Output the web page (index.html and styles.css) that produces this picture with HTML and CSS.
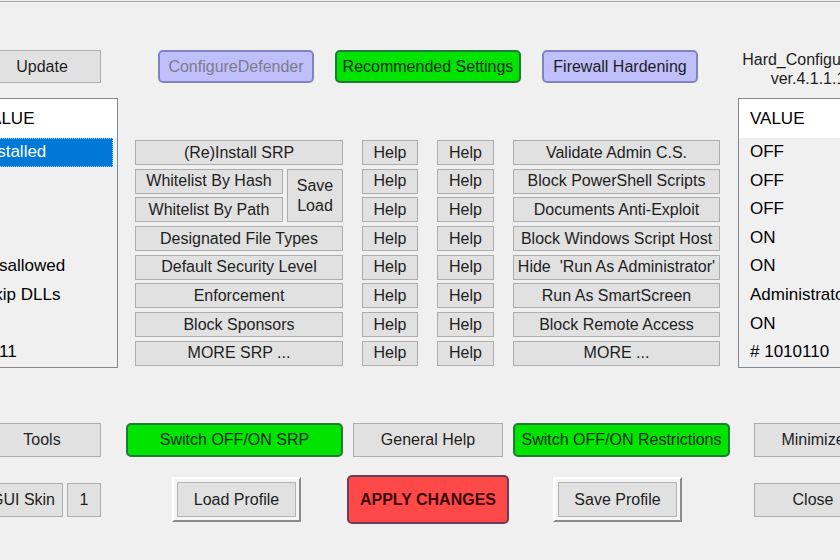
FILE: index.html
```html
<!DOCTYPE html>
<html lang="en">
    <head>
        <meta charset="UTF-8">
        <meta name="viewport" content="width=device-width, initial-scale=1.0">
        <link rel="stylesheet" href="styles.css">
        <title>Hard_Configurator</title>
    </head>

    <body>
    <div class="window">

        <div class="row row-top">
            <button class="btn btn-side">Update</button>
            <button class="btn pill lilac dim defender">ConfigureDefender</button>
            <button class="btn pill green recommended">Recommended Settings</button>
            <button class="btn pill lilac firewall">Firewall Hardening</button>
            <div class="title">Hard_Configurator<br>ver.4.1.1.1</div>
        </div>

        <div class="row row-middle">
            <div class="list list-left">
                <div class="list-head">VALUE</div>
                <div class="list-row selected">Installed</div>
                <div class="list-row"></div>
                <div class="list-row"></div>
                <div class="list-row"></div>
                <div class="list-row">Disallowed</div>
                <div class="list-row">Skip DLLs</div>
                <div class="list-row"></div>
                <div class="list-row">W11</div>
            </div>

            <div class="panel">
                <button class="btn">(Re)Install SRP</button>
                <button class="btn">Help</button>
                <button class="btn">Help</button>
                <button class="btn">Validate Admin C.S.</button>

                <div class="split">
                    <button class="btn">Whitelist By Hash</button>
                    <button class="btn">Whitelist By Path</button>
                    <button class="btn stack">Save<br>Load</button>
                </div>
                <button class="btn">Help</button>
                <button class="btn">Help</button>
                <button class="btn">Block PowerShell Scripts</button>

                <button class="btn">Help</button>
                <button class="btn">Help</button>
                <button class="btn">Documents Anti-Exploit</button>

                <button class="btn">Designated File Types</button>
                <button class="btn">Help</button>
                <button class="btn">Help</button>
                <button class="btn">Block Windows Script Host</button>

                <button class="btn">Default Security Level</button>
                <button class="btn">Help</button>
                <button class="btn">Help</button>
                <button class="btn">Hide &nbsp;'Run As Administrator'</button>

                <button class="btn">Enforcement</button>
                <button class="btn">Help</button>
                <button class="btn">Help</button>
                <button class="btn">Run As SmartScreen</button>

                <button class="btn">Block Sponsors</button>
                <button class="btn">Help</button>
                <button class="btn">Help</button>
                <button class="btn">Block Remote Access</button>

                <button class="btn">MORE SRP ...</button>
                <button class="btn">Help</button>
                <button class="btn">Help</button>
                <button class="btn">MORE ...</button>
            </div>

            <div class="list list-right">
                <div class="list-head">VALUE</div>
                <div class="list-row">OFF</div>
                <div class="list-row">OFF</div>
                <div class="list-row">OFF</div>
                <div class="list-row">ON</div>
                <div class="list-row">ON</div>
                <div class="list-row">Administrator</div>
                <div class="list-row">ON</div>
                <div class="list-row"># 1010110</div>
            </div>
        </div>

        <div class="row row-switch">
            <button class="btn btn-side tall">Tools</button>
            <button class="btn pill green switch-srp">Switch OFF/ON SRP</button>
            <button class="btn tall general">General Help</button>
            <button class="btn pill green switch-restr">Switch OFF/ON Restrictions</button>
            <button class="btn tall minimize">Minimize</button>
        </div>

        <div class="row row-bottom">
            <button class="btn tall skin">GUI Skin</button>
            <button class="btn tall skin-num">1</button>
            <button class="raised load"><span class="face">Load Profile</span></button>
            <button class="btn pill red apply">APPLY CHANGES</button>
            <button class="raised save"><span class="face">Save Profile</span></button>
            <button class="btn tall close">Close</button>
        </div>

    </div>
    </body>
</html>
```

FILE: styles.css
```css
* { box-sizing: border-box; }

html, body { margin: 0; height: 100%; }

body {
    background-color: #f0f0f0; overflow: hidden;
    font-family: "Liberation Sans", Arial, sans-serif;
    font-size: 16px; color: #1e1e1e;
}

/* the dialog is wider than the view, its left edge is cut off */
.window {
    width: 960px; margin: 1px 0 0 -29px;
    border-top: 1px solid #a6a6a6;
}

.row { display: flex; align-items: flex-start; }

.btn {
    height: 33px; padding: 0; margin: 0;
    font: inherit; color: #1e1e1e; white-space: nowrap;
    background: #e1e1e1; border: 1px solid #adadad;
}

.btn-side { width: 118px; margin-left: 12px; }
.tall { height: 34px; }

.pill { border-radius: 5px; border-width: 2px; border-style: solid; }
.lilac { background: #bfbffb; border-color: #8282bd; }
.green { background: #00e400; border-color: #1e7a34; color: #0b2a0b; }
.red { background: #ff4848; border-color: #6e3c58; color: #3a0808; }
.dim { color: #7c7c8c; }

/* top row, the title may hang below the buttons */
.row-top { margin-top: 48px; height: 33px; }
.defender { width: 156px; margin-left: 57px; }
.recommended { width: 186px; margin-left: 21px; }
.firewall { width: 156px; margin-left: 21px; }

.title {
    width: 140px; margin-left: 40px; flex-shrink: 0;
    text-align: center; line-height: 19px; white-space: nowrap;
}

/* lists */
.row-middle { margin-top: 15px; }

.list {
    width: 147px; height: 270px; flex-shrink: 0;
    border: 1px solid #828790; background: #f0f0f0;
    font-size: 17px; color: #000; white-space: nowrap; overflow: hidden;
}

.list-head { height: 39px; line-height: 39px; padding-left: 11px; background: #fff; }
.list-row { height: 28.6px; line-height: 28.6px; padding-left: 11px; }
.list-left .list-head { padding-left: 8px; }

.selected {
    background: #0078d7; color: #fff; margin-right: 4px;
    outline: 1px dotted #9cc8ef; outline-offset: -1px;
}

.list-right { margin-left: 18px; }

/* button grid */
.panel {
    display: grid; margin: 42px 0 0 17px;
    grid-template-columns: 208px 56px 57px 207px;
    grid-template-rows: repeat(8, 25px);
    column-gap: 19px; row-gap: 3.7px;
}

.panel .btn { height: 25px; }

.split {
    grid-row: span 2; display: grid;
    grid-template-columns: 148px 56px;
    grid-template-rows: 25px 25px;
    column-gap: 4px; row-gap: 3.7px;
}

.split .stack { grid-column: 2; grid-row: 1 / 3; height: auto; line-height: 20px; }

/* switches */
.row-switch { margin-top: 55px; }
.switch-srp { width: 217px; height: 34px; margin-left: 25px; }
.general { width: 150px; margin-left: 10px; }
.switch-restr { width: 217px; height: 34px; margin-left: 10px; }
.minimize { width: 118px; margin-left: 24px; }

/* bottom row */
.row-bottom { margin-top: 18px; align-items: center; }
.skin { width: 80px; margin-left: 12px; }
.skin-num { width: 34px; margin-left: 4px; }

.raised {
    width: 129px; height: 45px; padding: 3px;
    font: inherit; color: #1e1e1e; background: #f5f5f5;
    border: 2px solid; border-color: #fff #8a8a8a #8a8a8a #fff;
}

.face {
    display: flex; height: 100%; align-items: center; justify-content: center;
    background: #e1e1e1; border: 1px solid #b3b3b3;
}

.load { margin-left: 71px; }
.apply { width: 162px; height: 49px; margin-left: 46px; font-weight: bold; }
.save { margin-left: 44px; }
.close { width: 118px; margin-left: 72px; }
```
